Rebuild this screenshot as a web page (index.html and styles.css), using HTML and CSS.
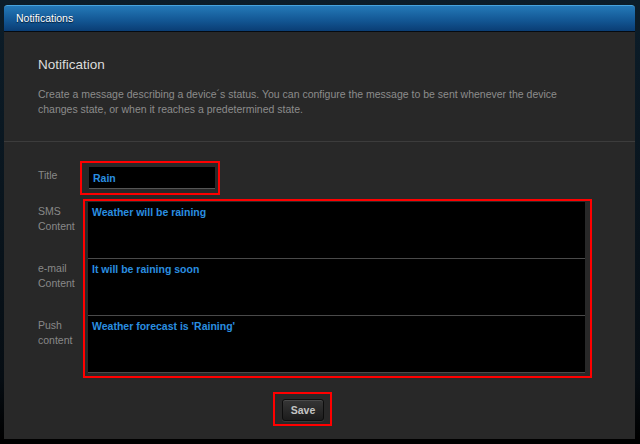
FILE: index.html
```html
<!DOCTYPE html>
<html>
<head>
<meta charset="utf-8">
<link rel="stylesheet" href="styles.css">
</head>
<body>
<div class="panel">
  <div class="panel-header">Notifications</div>
  <div class="intro">
    <h1 class="intro-title">Notification</h1>
    <p class="intro-text">Create a message describing a device´s status. You can configure the message to be sent whenever the device changes state, or when it reaches a predetermined state.</p>
  </div>
  <div class="form">
    <div class="row">
      <div class="label label-title">Title</div>
      <div class="mark mark-title">
        <div class="input">Rain</div>
      </div>
    </div>
    <div class="row row-content">
      <div class="labels">
        <div class="label label-block">SMS<br>Content</div>
        <div class="label label-block">e-mail<br>Content</div>
        <div class="label label-block">Push<br>content</div>
      </div>
      <div class="mark mark-areas">
        <div class="area">Weather will be raining</div>
        <div class="area">It will be raining soon</div>
        <div class="area">Weather forecast is 'Raining'</div>
      </div>
    </div>
    <div class="actions">
      <div class="mark mark-save">
        <button class="btn">Save</button>
      </div>
    </div>
  </div>
</div>
</body>
</html>
```
FILE: styles.css
```css
html, body {
  margin: 0;
  padding: 0;
}
body {
  width: 640px;
  height: 444px;
  overflow: hidden;
  background: linear-gradient(#0c1d29, #060d13 85%, #000 99%);
  font-family: "Liberation Sans", Arial, sans-serif;
}
.panel {
  margin: 5px 0 0 4px;
  width: 631px;
  height: 434px;
  background: #282828;
  border-radius: 3px 3px 0 0;
  overflow: hidden;
}
.panel-header {
  height: 25px;
  border-top: 1px solid #48a3dc;
  border-bottom: 1px solid #050a10;
  background: linear-gradient(#2479b8, #125592 60%, #0a3d74);
  color: #fff;
  font-size: 10.5px;
  line-height: 24px;
  padding-left: 12px;
  text-shadow: 0 1px 1px #02162c;
  border-radius: 3px 3px 0 0;
}
.intro {
  display: flow-root;
  padding: 25px 34px 24px;
  border-bottom: 1px solid #3c3c3c;
}
.intro-title {
  margin: 0;
  font-size: 13.5px;
  font-weight: normal;
  line-height: 16px;
  color: #dcdcdc;
}
.intro-text {
  margin: 14px 0 0;
  font-size: 10.5px;
  line-height: 15px;
  color: #8c8c8c;
  width: 540px;
}
.form {
  padding: 19px 0 0 34px;
}
.row {
  display: flex;
}
.label {
  color: #888;
  font-size: 10.5px;
  line-height: 15px;
}
.label-title {
  width: 42px;
  padding-top: 7px;
}
.mark {
  border: 2px solid #f00;
  box-sizing: border-box;
}
.mark-title {
  width: 140px;
  height: 34px;
  padding: 4px 3px 0 7px;
}
.input {
  height: 22px;
  box-sizing: border-box;
  background: #000;
  border-bottom: 1px solid #555;
  color: #2a8fe0;
  font-size: 10.5px;
  font-weight: bold;
  line-height: 22px;
  padding-left: 4px;
}
.row-content {
  margin-top: 4px;
}
.labels {
  width: 45px;
  padding-top: 3px;
}
.label-block {
  height: 57px;
  box-sizing: border-box;
  padding-top: 2px;
}
.mark-areas {
  width: 509px;
  height: 179px;
  padding: 1px 5px 0 3px;
}
.area {
  height: 57px;
  box-sizing: border-box;
  background: #000;
  border-bottom: 1px solid #4a4a4a;
  color: #2a8fe0;
  font-size: 10.5px;
  font-weight: bold;
  line-height: 15px;
  padding: 3px 0 0 4px;
}
.actions {
  display: flex;
  padding-top: 14px;
  padding-left: 235px;
}
.mark-save {
  width: 59px;
  height: 34px;
  padding: 5px 0 0 7px;
}
.btn {
  display: block;
  width: 42px;
  height: 22px;
  margin: 0;
  padding: 0;
  border: 1px solid #0d0d0d;
  border-radius: 3px;
  background: linear-gradient(#363636, #1c1c1c);
  box-shadow: inset 0 1px 0 #4a4a4a, 0 1px 0 #3a3a3a;
  color: #c4c4c4;
  font-family: "Liberation Sans", Arial, sans-serif;
  font-size: 10.5px;
  font-weight: bold;
}
```
